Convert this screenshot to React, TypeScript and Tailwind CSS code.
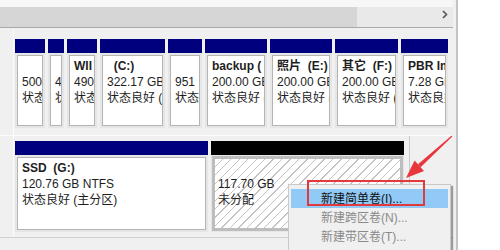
const font = { fontFamily: '"Segoe UI", "Liberation Sans", "Noto Sans CJK SC", sans-serif' }

type Part = { w: number; name: string; size: string; status: string }

const disk0: Part[] = [
  { w: 30, name: '', size: '500', status: '状态良好' },
  { w: 16, name: '', size: '4', status: '状态' },
  { w: 30, name: 'WII', size: '490', status: '状态良好' },
  { w: 65, name: '\u00a0\u00a0(C:)', size: '322.17 GB', status: '状态良好 (主' },
  { w: 34, name: '', size: '951', status: '状态良好' },
  { w: 62, name: 'backup (', size: '200.00 GB', status: '状态良好 (' },
  { w: 62, name: '照片\u00a0\u00a0(E:)', size: '200.00 GB', status: '状态良好 (' },
  { w: 63, name: '其它\u00a0\u00a0(F:)', size: '200.00 GB', status: '状态良好 (' },
  { w: 47, name: 'PBR Image', size: '7.28 GB', status: '状态良好' },
]

function Partition({ p, tall }: { p: Part; tall: string }) {
  return (
    <div className={`flex flex-none flex-col ${tall}`} style={{ width: p.w }}>
      <div className="h-[14px] bg-[#00007f]" />
      <div className="flex-1 bg-[#e6e6e6] p-[2px]">
        <div className="h-full overflow-hidden whitespace-nowrap border border-[#b4b4b4] bg-white pl-[4px] pt-[2px] text-[12px] leading-[16px] text-[#1e1e1e]">
          <div className="h-[16px] font-bold">{p.name}</div>
          <div>{p.size}</div>
          <div>{p.status}</div>
        </div>
      </div>
    </div>
  )
}

export default function App() {
  return (
    <div className="relative flex h-[250px] w-[500px] overflow-hidden bg-white" style={font}>
      {/* 主面板 */}
      <div className="flex w-[453px] flex-none flex-col bg-[#f0f0f0]">
        <div className="h-[7px] bg-[#f7f7f7]" />
        {/* 横向滚动条 */}
        <div className="flex h-[21px] border-b border-[#a9a9a9]">
          <div className="w-[357px] bg-[#d6d6d6]" />
          <div className="flex flex-1 items-start justify-end bg-[#e9e9e9] pr-[5px] pt-[3px]">
            <svg width="6" height="9" viewBox="0 0 6 9">
              <polyline points="1,1 4.5,4.5 1,8" fill="none" stroke="#555" strokeWidth="1.6" />
            </svg>
          </div>
        </div>

        <div className="flex flex-col pt-[2px]">
          {/* 磁盘 0 */}
          <div className="flex h-[106px] border-b border-[#fcfcfc]">
            <div className="w-[14px] flex-none border-r border-[#fdfdfd]" />
            <div className="flex gap-[3px] pl-[1px] pt-[9px]">
              {disk0.map((p, i) => (
                <Partition key={i} p={p} tall="h-[89px]" />
              ))}
            </div>
          </div>
          {/* 磁盘 1 */}
          <div className="flex h-[102px] border-b border-[#d0d0d0]">
            <div className="w-[14px] flex-none border-r border-[#fdfdfd]" />
            <div className="flex gap-[3px] border-r border-[#c8c8c8] pl-[1px] pr-[5px] pt-[5px]">
              <Partition p={{ w: 193, name: 'SSD\u00a0\u00a0(G:)', size: '120.76 GB NTFS', status: '状态良好 (主分区)' }} tall="h-[91px]" />
              <div className="flex h-[91px] w-[193px] flex-col">
                <div className="h-[14px] bg-black" />
                <div className="flex-1 bg-[#e6e6e6] p-[1px]">
                  <div className="h-full overflow-hidden whitespace-nowrap border-[3px] border-[#bdbdbd] bg-[repeating-linear-gradient(135deg,#ffffff_0px,#ffffff_5px,#c4c4c4_5px,#c4c4c4_6px)] pl-[3px] pt-[1px] text-[12px] leading-[16px] text-[#1e1e1e]">
                    <div className="h-[16px]" />
                    <div>117.70 GB</div>
                    <div>未分配</div>
                  </div>
                </div>
              </div>
            </div>
          </div>
        </div>
      </div>

      {/* 右侧边框 */}
      <div className="w-[5px] flex-none border-r-2 border-[#c4c4c4] bg-[#f0f0f0]" />
      <div className="flex-1 bg-white" />

      {/* 右键菜单 */}
      <div className="absolute left-[288px] top-[184px] w-[163px] border border-[#c9c9c9] bg-[#f0f0f0] pt-[4px] text-[12px] shadow-[2px_2px_1px_rgba(0,0,0,0.35)]">
        <div className="mx-[2px] flex h-[19px] items-center bg-[#91c9f7] pl-[30px] text-[#111]">新建简单卷(I)...</div>
        <div className="mx-[2px] flex h-[19px] items-center pl-[30px] text-[#8a8a8a]">新建跨区卷(N)...</div>
        <div className="mx-[2px] flex h-[19px] items-center pl-[30px] text-[#8a8a8a]">新建带区卷(T)...</div>
        <div className="h-[20px]" />
      </div>

      {/* 红框标注 */}
      <div className="absolute left-[307px] top-[180px] h-[26px] w-[118px] border-2 border-[#e2393f]" />

      {/* 红色箭头 */}
      <svg className="absolute left-0 top-0" width="500" height="250" viewBox="0 0 500 250">
        <polygon points="452.3,136.4 451.7,135.6 418,164.3 420.6,167.3" fill="#e8363c" />
        <polygon points="406,178 424,171 414.6,160.6" fill="#e8363c" />
      </svg>
    </div>
  )
}
